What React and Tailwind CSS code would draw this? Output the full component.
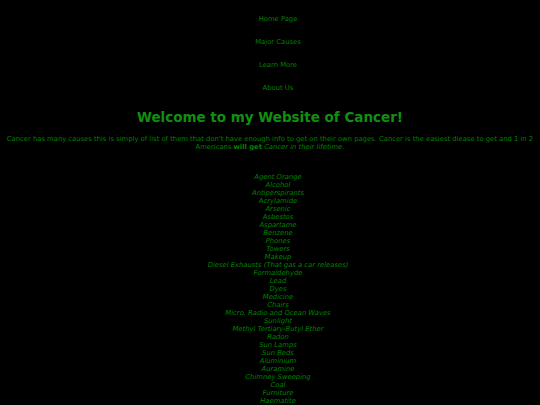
import React from 'react';

const navLinks = ['Home Page', 'Major Causes', 'Learn More', 'About Us'];

const causes = [
  'Agent Orange',
  'Alcohol',
  'Antiperspirants',
  'Acrylamide',
  'Arsenic',
  'Asbestos',
  'Aspartame',
  'Benzene',
  'Phones',
  'Towers',
  'Makeup',
  'Diesel Exhausts (That gas a car releases)',
  'Formaldehyde',
  'Lead',
  'Dyes',
  'Medicine',
  'Chairs',
  'Micro, Radio and Ocean Waves',
  'Sunlight',
  'Methyl Tertiary-Butyl Ether',
  'Radon',
  'Sun Lamps',
  'Sun Beds',
  'Aluminium',
  'Auramine',
  'Chimney Sweeping',
  'Coal',
  'Furniture',
  'Haematite',
  'Isopropyl Alcohol',
  'Magenta',
  'Painting',
];

const App = () => {
  return (
    <div className="min-h-screen bg-black text-[#008000] text-center font-['DejaVu_Sans',sans-serif] pt-[14.5px] pb-6">
      {/* Top navigation (lists keep their left indent, so they sit a bit right of centre) */}
      <ul className="flex flex-col items-center gap-[15.3px] pl-[16px] text-[6.8px] leading-[8px]">
        {navLinks.map((link) => (
          <li key={link}>
            <a href="#">{link}</a>
          </li>
        ))}
      </ul>

      <h1 className="mt-[16.5px] text-[13.5px] leading-[16px] font-bold text-[#109010]">
        Welcome to my Website of Cancer!
      </h1>

      <p className="mt-[10px] px-[4px] text-[6.8px] leading-[8px]">
        Cancer has many causes this is simply of list of them that don't have enough info to get on their own pages. Cancer is the easiest diease to get and 1 in 2 Americans <b>will get</b> <i>Cancer in their lifetime.</i>
      </p>

      <ul className="mt-[22px] pl-[16px] italic text-[6.8px] leading-[8px]">
        {causes.map((cause) => (
          <li key={cause}>{cause}</li>
        ))}
      </ul>
    </div>
  );
};

export default App;
